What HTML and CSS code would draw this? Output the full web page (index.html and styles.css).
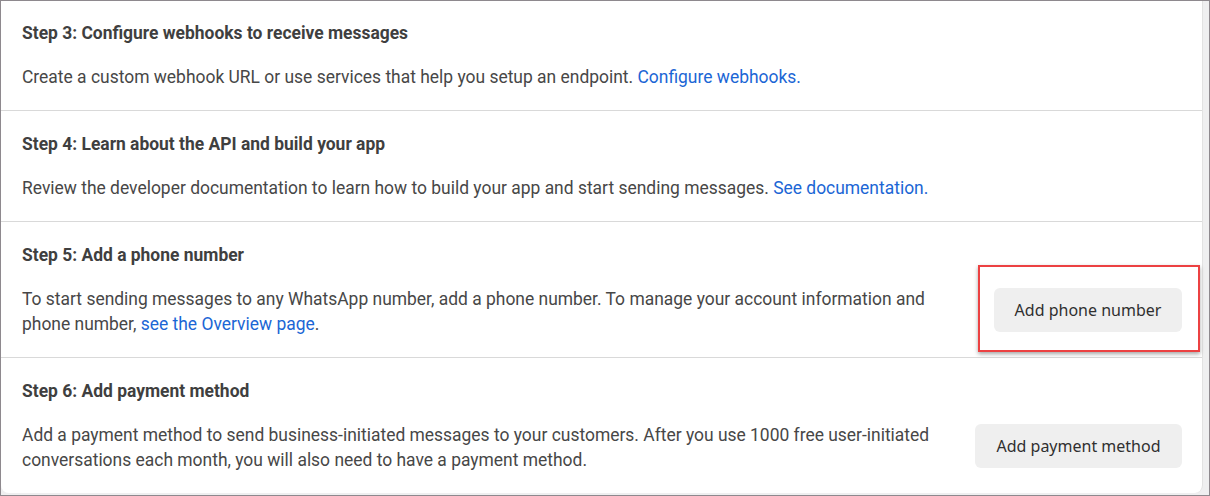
FILE: index.html
```html
<!DOCTYPE html>
<html lang="en">
<head>
<meta charset="utf-8">
<title>WhatsApp setup steps</title>
<link rel="stylesheet" href="styles.css">
</head>
<body>
<div class="frame">
  <div class="card">
    <section class="step">
      <h2 class="step-title">Step 3: Configure webhooks to receive messages</h2>
      <p class="step-text">Create a custom webhook URL or use services that help you setup an endpoint. <a class="link" href="#">Configure webhooks.</a></p>
    </section>
    <section class="step">
      <h2 class="step-title">Step 4: Learn about the API and build your app</h2>
      <p class="step-text">Review the developer documentation to learn how to build your app and start sending messages. <a class="link" href="#">See documentation.</a></p>
    </section>
    <section class="step">
      <h2 class="step-title">Step 5: Add a phone number</h2>
      <div class="step-row">
        <p class="step-text row-text">To start sending messages to any WhatsApp number, add a phone number. To manage your account information and phone number, <a class="link" href="#">see the Overview page</a>.</p>
        <div class="action highlighted">
          <button class="btn btn-phone" type="button">Add phone number</button>
          <span class="highlight-box"></span>
        </div>
      </div>
    </section>
    <section class="step">
      <h2 class="step-title">Step 6: Add payment method</h2>
      <div class="step-row">
        <p class="step-text row-text">Add a payment method to send business-initiated messages to your customers. After you use 1000 free user-initiated conversations each month, you will also need to have a payment method.</p>
        <div class="action">
          <button class="btn btn-payment" type="button">Add payment method</button>
        </div>
      </div>
    </section>
  </div>
</div>
</body>
</html>
```

FILE: styles.css
```css
* { box-sizing: border-box; }
html, body { margin: 0; padding: 0; }
body {
  width: 1210px;
  height: 496px;
  overflow: hidden;
  font-family: Roboto, "Liberation Sans", Arial, sans-serif;
  background: #ffffff;
}
.frame {
  width: 1210px;
  height: 496px;
  border: 1px solid #8e898e;
  background: #efeff0;
  padding: 0 6px 2px 0;
  display: flex;
}
.card {
  flex: 1;
  background: #ffffff;
  border-radius: 0 0 8px 8px;
  border-right: 1px solid #e2e2e2;
  display: flex;
  flex-direction: column;
}
.step {
  padding: 21px 20px 20px 21px;
  display: flex;
  flex-direction: column;
  gap: 20px;
}
.step:first-child { padding-top: 20px; }
.step + .step { border-top: 1px solid #d9d9d9; }
.step-title {
  margin: 0;
  font-size: 17.45px;
  line-height: 24px;
  font-weight: 700;
  color: #3f3f3f;
}
.step-text {
  margin: 0;
  font-size: 17.45px;
  line-height: 25px;
  color: #474747;
}
.link { color: #1b66d5; text-decoration: none; }
.step-row {
  display: flex;
  align-items: center;
  justify-content: space-between;
}
.row-text { width: 915px; flex: none; }
.action { position: relative; display: flex; flex: none; margin-bottom: 4px; }
.btn {
  height: 44px;
  padding: 0 20px;
  border: none;
  border-radius: 6px;
  background: #efefef;
  color: #303030;
  font-family: "Noto Sans", "Open Sans", sans-serif;
  font-size: 16px;
  white-space: nowrap;
  cursor: pointer;
}
.btn-phone { width: 188px; padding: 0; }
.btn-payment { width: 207px; padding: 0; }
.highlight-box {
  position: absolute;
  left: -16px;
  right: -18px;
  top: -23px;
  bottom: -20px;
  border: 2px solid #ec4142;
  box-shadow: 0 2px 4px rgba(0,0,0,0.35);
  pointer-events: none;
}
```
